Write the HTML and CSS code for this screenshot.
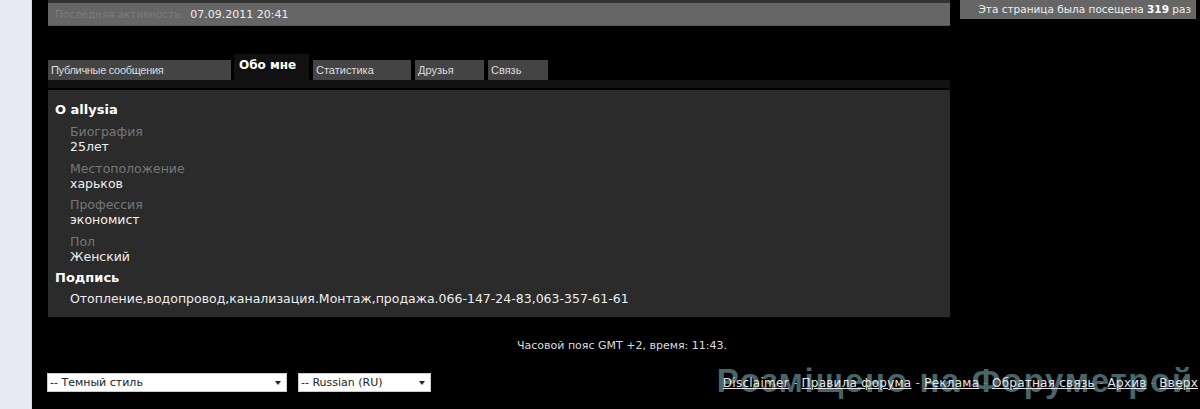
FILE: index.html
```html
<!DOCTYPE html>
<html lang="ru">
<head>
    <meta charset="UTF-8">
    <title>Профиль allysia</title>
    <link rel="stylesheet" href="styles.css">
</head>
<body>
    <div class="page">
        <div class="gutter"></div>
        <div class="main">
            <div class="top">
                <div class="profile">
                    <div class="activity">
                        <span class="activity-label">Последняя активность:</span>
                        <span class="activity-date">07.09.2011 20:41</span>
                    </div>

                    <div class="tabs">
                        <span class="tab tab-wide">Публичные сообщения</span>
                        <span class="tab active">Обо мне</span>
                        <span class="tab tab-stats">Статистика</span>
                        <span class="tab tab-friends">Друзья</span>
                        <span class="tab tab-contact">Связь</span>
                    </div>
                    <div class="tab-line"></div>

                    <div class="panel">
                        <h3>O allysia</h3>
                        <dl class="fields">
                            <dt>Биография</dt>
                            <dd>25лет</dd>
                            <dt>Местоположение</dt>
                            <dd>харьков</dd>
                            <dt>Профессия</dt>
                            <dd>экономист</dd>
                            <dt>Пол</dt>
                            <dd>Женский</dd>
                        </dl>
                        <h3>Подпись</h3>
                        <p class="signature">Отопление,водопровод,канализация.Монтаж,продажа.066-147-24-83,063-357-61-61</p>
                    </div>
                </div>

                <div class="side">
                    <div class="visits">Эта страница была посещена <b>319</b> раз</div>
                </div>
            </div>

            <div class="time">Часовой пояс GMT +2, время: 11:43.</div>

            <div class="footer">
                <div class="selects">
                    <div class="select select-style">-- Темный стиль <span class="arrow"></span></div>
                    <div class="select select-lang">-- Russian (RU) <span class="arrow"></span></div>
                </div>
                <div class="links">
                    <span class="watermark">Розміщено на Форуметрой</span>
                    <a href="#">Disclaimer</a> - <a href="#">Правила форума</a> - <a href="#">Реклама</a> - <a href="#">Обратная связь</a> - <a href="#">Архив</a> - <a href="#">Вверх</a>
                </div>
            </div>
        </div>
    </div>
</body>
</html>
```

FILE: styles.css
```css
* {
    margin: 0;
    padding: 0;
    box-sizing: border-box;
}

body {
    background: #000;
    font-family: "DejaVu Sans", Verdana, sans-serif;
    font-size: 11px;
    color: #ddd;
    height: 409px;
    overflow: hidden;
}

.page {
    display: flex;
    height: 409px;
}

.gutter {
    width: 32px;
    background: #e7e9f4;
    border-right: 1px solid #d4d7e6;
}

.main {
    flex: 1;
    padding-left: 16px;
}

.top {
    display: flex;
    gap: 10px;
}

.profile {
    width: 902px;
}

/* top activity bar */
.activity {
    height: 26px;
    background: #666;
    border-top: 3px solid #333;
    border-bottom: 1px solid #555;
    padding: 5px 7px;
    font-size: 11px;
}

.activity-label {
    color: #7b7b7b;
    font-size: 10.4px;
}

.activity-date {
    color: #eee;
    margin-left: 3px;
}

/* tabs */
.tabs {
    display: flex;
    align-items: flex-end;
    margin-top: 28px;
    height: 26px;
}

.tab {
    background: #444;
    color: #ddd;
    font-family: "Liberation Sans", Arial, sans-serif;
    font-size: 11px;
    height: 20px;
    line-height: 20px;
    padding: 0 3px;
    margin-right: 4px;
}

.tab-wide { width: 183px; letter-spacing: -0.3px; }
.tab-stats { width: 98px; }
.tab-friends { width: 69px; }
.tab-contact { width: 60px; }

.tab.active {
    background: #111;
    color: #fff;
    font-family: "DejaVu Sans", Verdana, sans-serif;
    font-weight: bold;
    font-size: 12px;
    height: 26px;
    line-height: 22px;
    padding: 0 5px;
    width: 75px;
    margin-left: -1px;
}

.tab-line {
    height: 8px;
    background: #121212;
    margin-bottom: 2px;
}

/* about panel */
.panel {
    background: #2b2b2b;
    height: 227px;
    padding: 12px 7px 0;
}

.panel h3 {
    font-size: 13px;
    color: #fff;
    font-weight: bold;
    line-height: 16px;
}

.fields {
    padding-left: 15px;
    margin: 6px 0 6px;
}

.fields dt {
    color: #777;
    font-size: 12.5px;
    line-height: 15px;
    margin-top: 6.5px;
}

.fields dt:first-child {
    margin-top: 0;
}

.fields dd {
    color: #f0f0f0;
    font-size: 12.5px;
    line-height: 15px;
}

.signature {
    padding-left: 15px;
    margin-top: 5px;
    font-size: 12.5px;
    color: #eee;
}

/* right column */
.side {
    width: 236px;
}

.visits {
    background: #666;
    height: 19px;
    line-height: 19px;
    text-align: right;
    padding-right: 5px;
    font-size: 10.5px;
    color: #eee;
}

.visits b {
    color: #fff;
}

/* footer */
.time {
    text-align: center;
    margin-top: 22px;
    padding-right: 4px;
    font-size: 11px;
    color: #ddd;
}

.footer {
    display: flex;
    justify-content: space-between;
    align-items: center;
    margin-top: 21px;
    padding-right: 2px;
}

.selects {
    display: flex;
    gap: 11px;
    margin-left: -1px;
}

.select {
    position: relative;
    background: #fff;
    color: #222;
    height: 19px;
    line-height: 17px;
    padding-left: 2px;
    font-size: 11px;
    border: 1px solid #ccc;
}

.select-style { width: 240px; }
.select-lang { width: 133px; }

.arrow {
    position: absolute;
    right: 5px;
    top: 7px;
    border-left: 3.5px solid transparent;
    border-right: 3.5px solid transparent;
    border-top: 4px solid #222;
}

.links {
    position: relative;
    font-size: 12px;
    letter-spacing: 0.25px;
    color: #ccc;
}

.links a {
    position: relative;
    color: #e6e6e6;
    text-decoration: underline;
}

.watermark {
    position: absolute;
    right: 4px;
    top: -14px;
    width: max-content;
    white-space: nowrap;
    font-family: "Liberation Sans", Arial, sans-serif;
    font-size: 33px;
    font-weight: bold;
    letter-spacing: 1.7px;
    color: #58777c;
    opacity: 0.85;
}
```
